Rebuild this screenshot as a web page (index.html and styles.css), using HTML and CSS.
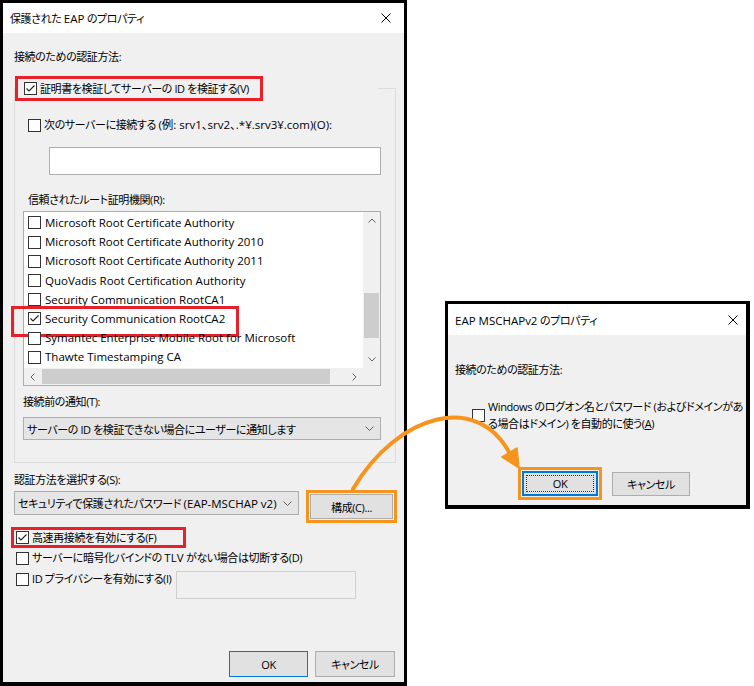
FILE: index.html
```html
<!DOCTYPE html>
<html lang="ja">
<head>
    <meta charset="UTF-8">
    <link rel="stylesheet" href="styles.css">
</head>
<body>
    <div class="page">
        <!-- protected EAP properties -->
        <div class="dialog eap">
            <div class="titlebar">
                <span>保護された <span class="en">EAP</span> のプロパティ</span>
                <svg class="close" width="10" height="10" viewBox="0 0 10 10"><path d="M0.5 0.5L9.5 9.5M9.5 0.5L0.5 9.5" stroke="#000" stroke-width="1"/></svg>
            </div>
            <div class="dialog-body">
                <div class="label">接続のための認証方法:</div>

                <fieldset class="group">
                    <legend class="group-head">
                        <span class="check red-box head-check">
                            <span class="cb"><svg width="11" height="11" viewBox="0 0 11 11"><polyline points="1.5,5.5 4,8 9.5,2.5" fill="none" stroke="#222" stroke-width="1.1"/></svg></span>
                            <span>証明書を検証してサーバーの ID を検証する(V)</span>
                        </span>
                    </legend>

                    <div class="check server-check">
                        <span class="cb"></span>
                        <span>次のサーバーに接続する <span class="en">(例: srv1、srv2、.*¥.srv3¥.com)(O):</span></span>
                    </div>
                    <div class="textbox server-input"></div>

                    <div class="label ca-label">信頼されたルート証明機関(R):</div>
                    <div class="listbox">
                        <div class="list-main">
                            <div class="list-items">
                                <div class="check item"><span class="cb"></span><span>Microsoft Root Certificate Authority</span></div>
                                <div class="check item"><span class="cb"></span><span>Microsoft Root Certificate Authority 2010</span></div>
                                <div class="check item"><span class="cb"></span><span>Microsoft Root Certificate Authority 2011</span></div>
                                <div class="check item"><span class="cb"></span><span>QuoVadis Root Certification Authority</span></div>
                                <div class="check item"><span class="cb"></span><span>Security Communication RootCA1</span></div>
                                <div class="check item marked">
                                    <span class="cb"><svg width="11" height="11" viewBox="0 0 11 11"><polyline points="1.5,5.5 4,8 9.5,2.5" fill="none" stroke="#222" stroke-width="1.1"/></svg></span>
                                    <span>Security Communication RootCA2</span>
                                </div>
                                <div class="check item"><span class="cb"></span><span>Symantec Enterprise Mobile Root for Microsoft</span></div>
                                <div class="check item"><span class="cb"></span><span>Thawte Timestamping CA</span></div>
                            </div>
                            <div class="vscroll">
                                <div class="sb-btn"><svg width="8" height="5" viewBox="0 0 8 5"><polyline points="0.5,4.5 4,1 7.5,4.5" fill="none" stroke="#606060"/></svg></div>
                                <div class="vtrack"><div class="vthumb"></div></div>
                                <div class="sb-btn"><svg width="8" height="5" viewBox="0 0 8 5"><polyline points="0.5,0.5 4,4 7.5,0.5" fill="none" stroke="#606060"/></svg></div>
                            </div>
                        </div>
                        <div class="hscroll">
                            <div class="sb-btn"><svg width="5" height="8" viewBox="0 0 5 8"><polyline points="4.5,0.5 1,4 4.5,7.5" fill="none" stroke="#606060"/></svg></div>
                            <div class="htrack"><div class="hthumb"></div></div>
                            <div class="sb-btn"><svg width="5" height="8" viewBox="0 0 5 8"><polyline points="0.5,0.5 4,4 0.5,7.5" fill="none" stroke="#606060"/></svg></div>
                            <div class="sb-corner"></div>
                        </div>
                    </div>

                    <div class="label notify-label">接続前の通知(T):</div>
                    <div class="select notify-select">
                        <span>サーバーの ID を検証できない場合にユーザーに通知します</span>
                        <svg width="9" height="5" viewBox="0 0 9 5"><polyline points="0.5,0.5 4.5,4.5 8.5,0.5" fill="none" stroke="#606060"/></svg>
                    </div>
                </fieldset>

                <div class="label method-label">認証方法を選択する(S):</div>
                <div class="method-row">
                    <div class="select method-select">
                        <span>セキュリティで保護されたパスワード <span class="en">(EAP-MSCHAP v2)</span></span>
                        <svg width="9" height="5" viewBox="0 0 9 5"><polyline points="0.5,0.5 4.5,4.5 8.5,0.5" fill="none" stroke="#606060"/></svg>
                    </div>
                    <div class="orange-box">
                        <div class="btn config-btn">構成(C)...</div>
                    </div>
                </div>

                <div class="check red-box fast-check">
                    <span class="cb"><svg width="11" height="11" viewBox="0 0 11 11"><polyline points="1.5,5.5 4,8 9.5,2.5" fill="none" stroke="#222" stroke-width="1.1"/></svg></span>
                    <span>高速再接続を有効にする(F)</span>
                </div>
                <div class="check opt-check">
                    <span class="cb"></span>
                    <span>サーバーに暗号化バインドの <span class="en">TLV</span> がない場合は切断する(D)</span>
                </div>
                <div class="privacy-row">
                    <div class="check privacy-check">
                        <span class="cb"></span>
                        <span>ID プライバシーを有効にする(I)</span>
                    </div>
                    <div class="textbox disabled"></div>
                </div>

                <div class="buttons">
                    <div class="btn default">OK</div>
                    <div class="btn cancel">キャンセル</div>
                </div>
            </div>
        </div>

        <!-- EAP MSCHAPv2 properties -->
        <div class="dialog mschap">
            <div class="titlebar">
                <span><span class="en">EAP MSCHAPv2</span> のプロパティ</span>
                <svg class="close" width="10" height="10" viewBox="0 0 10 10"><path d="M0.5 0.5L9.5 9.5M9.5 0.5L0.5 9.5" stroke="#000" stroke-width="1"/></svg>
            </div>
            <div class="dialog-body">
                <div class="label">接続のための認証方法:</div>
                <div class="check win-check">
                    <span class="cb"></span>
                    <span class="two-line">Windows のログオン名とパスワード (およびドメインがあ<br>る場合はドメイン) を自動的に使う(<u>A</u>)</span>
                </div>
                <div class="buttons small-buttons">
                    <div class="orange-box">
                        <div class="btn focused">OK</div>
                    </div>
                    <div class="btn cancel2">キャンセル</div>
                </div>
            </div>
        </div>

        <svg class="arrow" width="754" height="686" viewBox="0 0 754 686">
            <path d="M353 489 C398 413, 478 392, 510 454" fill="none" stroke="#f7941d" stroke-width="4" stroke-linecap="round"/>
            <polygon points="519,468 517,448 502,457" fill="#f7941d" stroke="#f7941d" stroke-width="1.5" stroke-linejoin="round"/>
        </svg>
    </div>
</body>
</html>
```

FILE: styles.css
```css
* {
    margin: 0;
    padding: 0;
    box-sizing: border-box;
}

body {
    font-family: "Open Sans", "Noto Sans CJK JP", sans-serif;
    font-size: 11px;
    font-feature-settings: "palt";
    letter-spacing: -0.4px;
    color: #000;
    background: #fff;
}

/* latin runs inside japanese labels */
.en {
    font-size: 11.5px;
    letter-spacing: 0;
}

.page {
    position: relative;
    width: 754px;
    height: 686px;
    display: flex;
    align-items: flex-start;
}

.dialog {
    display: flex;
    flex-direction: column;
    background: #f0f0f0;
    border: 3px solid #000;
}

.eap {
    width: 407px;
    height: 686px;
    border-bottom-width: 4px;
}

.mschap {
    width: 305px;
    height: 208px;
    margin-left: 38px;
    margin-top: 301px;
    border-right-width: 4px;
    border-bottom-width: 4px;
}

.titlebar {
    display: flex;
    justify-content: space-between;
    align-items: center;
    height: 30px;
    padding: 0 13px 0 7px;
    background: #fff;
}

.mschap .titlebar {
    height: 31px;
    padding-right: 8px;
}

.dialog-body {
    flex: 1;
    display: flex;
    flex-direction: column;
    align-items: flex-start;
    padding: 16px 9px 5px 11px;
}

.mschap .dialog-body {
    padding: 27px 7px 5px 7px;
}

.label {
    line-height: 16px;
    white-space: nowrap;
}

/* checkbox + text */
.check {
    display: flex;
    align-items: center;
    gap: 3px;
    line-height: 16px;
    white-space: nowrap;
}

.cb {
    flex: none;
    display: flex;
    align-items: center;
    justify-content: center;
    width: 13px;
    height: 13px;
    border: 1px solid #333;
    background: #fff;
}

.red-box {
    border: 3px solid #e8202a;
}

/* group box */
.group {
    width: 382px;
    margin-top: 11px;
    padding: 0 0 22px 0;
    border: 1px solid #dcdcdc;
}

.group-head {
    padding: 0 115px 0 0;
}

.head-check {
    width: 248px;
    height: 25px;
    padding-left: 6px;
}

.server-check {
    margin: 16px 0 0 13px;
}

.textbox {
    background: #fff;
    border: 1px solid #adadad;
}

.server-input {
    width: 332px;
    height: 28px;
    margin: 14px 0 0 34px;
}

.ca-label {
    margin: 17px 0 0 13px;
}

.listbox {
    display: flex;
    flex-direction: column;
    width: 358px;
    height: 175px;
    margin: 3px 0 0 8px;
    background: #fff;
    border: 1px solid #adadad;
}

.list-main {
    flex: 1;
    display: flex;
}

.list-items {
    flex: 1;
    padding-top: 1.4px;
}

.item {
    position: relative;
    height: 19.2px;
    padding-left: 4px;
    gap: 4px;
    font-size: 11.5px;
    letter-spacing: 0;
}

.marked::after {
    content: "";
    position: absolute;
    left: -13px;
    top: -3px;
    width: 222px;
    height: 25px;
    border: 3px solid #e8202a;
}

.vscroll {
    display: flex;
    flex-direction: column;
    width: 17px;
    background: #f0f0f0;
}

.sb-btn {
    flex: none;
    display: flex;
    align-items: center;
    justify-content: center;
    width: 17px;
    height: 17px;
}

.vtrack {
    flex: 1;
    padding: 64px 1px 0;
}

.vthumb {
    height: 45px;
    background: #cdcdcd;
}

.hscroll {
    display: flex;
    height: 17px;
    background: #f0f0f0;
}

.htrack {
    flex: 1;
    padding: 1px 0 1px 1px;
}

.hthumb {
    width: 288px;
    height: 15px;
    background: #cdcdcd;
}

.sb-corner {
    width: 17px;
}

.notify-label {
    margin: 8px 0 0 8px;
}

.select {
    display: flex;
    justify-content: space-between;
    align-items: center;
    padding: 0 6px 0 3px;
    background: #e5e5e5;
    border: 1px solid #adadad;
    white-space: nowrap;
}

.notify-select {
    width: 358px;
    height: 23px;
    margin: 7px 0 0 8px;
}

.method-label {
    margin-top: 9px;
}

.method-row {
    display: flex;
    align-items: flex-start;
    gap: 7px;
    margin-top: 2px;
}

.method-select {
    width: 285px;
    height: 24px;
    margin-top: 1px;
}

.orange-box {
    padding: 1px;
    border: 3px solid #f7941d;
}

.btn {
    display: flex;
    align-items: center;
    justify-content: center;
    background: #e1e1e1;
    border: 1px solid #adadad;
    white-space: nowrap;
}

.config-btn {
    width: 83px;
    height: 25px;
}

.fast-check {
    width: 175px;
    height: 21px;
    margin: 4px 0 0 -3px;
    padding-left: 2px;
}

.opt-check {
    margin: 2px 0 0 2px;
}

.privacy-row {
    display: flex;
    align-items: flex-start;
    gap: 2px;
    margin: 5px 0 0 2px;
}

.privacy-check {
    width: 158px;
}

.textbox.disabled {
    width: 180px;
    height: 28px;
    background: #f0f0f0;
    border-color: #cfcfcf;
}

.buttons {
    display: flex;
    gap: 7px;
    align-self: flex-end;
    margin-top: auto;
}

.default {
    width: 79px;
    height: 26px;
    border-color: #0078d7;
}

.cancel {
    width: 80px;
    height: 26px;
}

/* MSCHAPv2 dialog */
.win-check {
    margin: 20px 0 0 17px;
}

.two-line {
    line-height: 17px;
}

.small-buttons {
    align-self: flex-start;
    align-items: center;
    gap: 10px;
    margin-left: 63px;
}

.focused {
    position: relative;
    width: 76px;
    height: 25px;
    border-color: #0078d7;
    box-shadow: inset 0 0 0 1px #0078d7;
}

.focused::after {
    content: "";
    position: absolute;
    inset: 3px;
    border: 1px dotted #333;
}

.cancel2 {
    width: 78px;
    height: 24px;
}

.arrow {
    position: absolute;
    left: 0;
    top: 0;
    pointer-events: none;
}
```
